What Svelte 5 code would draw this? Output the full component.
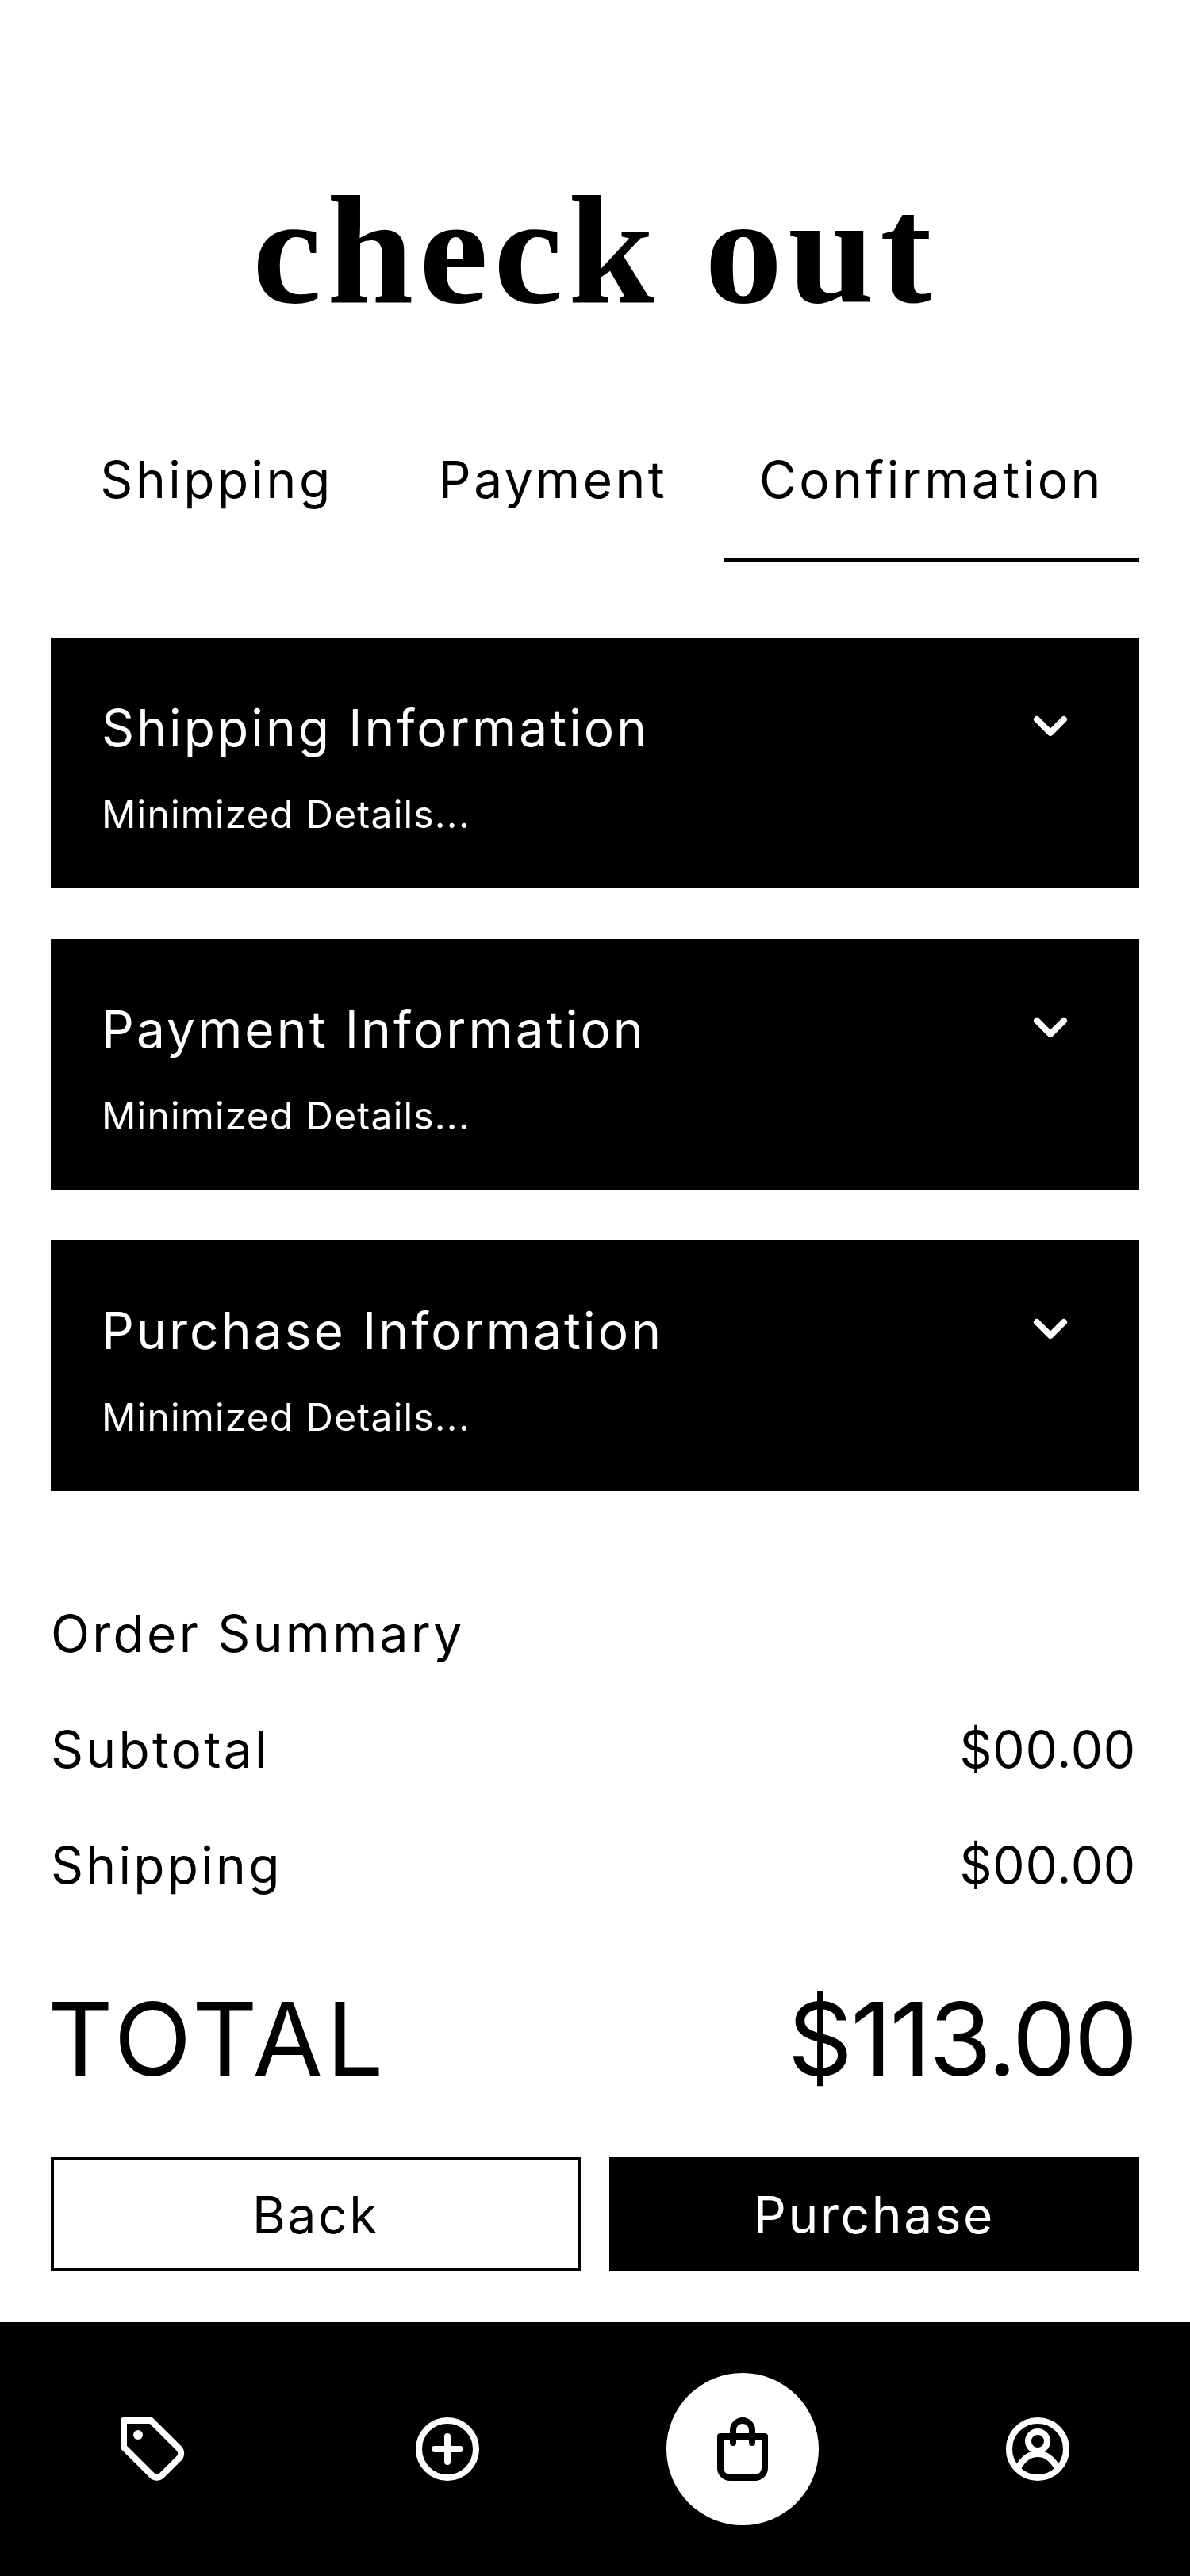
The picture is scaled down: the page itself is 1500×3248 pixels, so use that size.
<script>
  const tabs = [
    { label: 'Shipping', active: false },
    { label: 'Payment', active: false },
    { label: 'Confirmation', active: true }
  ];
  const cards = ['Shipping Information', 'Payment Information', 'Purchase Information'];
</script>

<div class="page">
  <h1 class="title">check out</h1>

  <nav class="tabs">
    {#each tabs as tab}
      <div class="tab" class:active={tab.active}>{tab.label}</div>
    {/each}
  </nav>

  <section class="cards">
    {#each cards as card}
      <article class="card">
        <div class="card-head">
          <span class="card-title">{card}</span>
          <svg class="chev" viewBox="0 0 96 96" fill="none" stroke="#fff" stroke-width="8" stroke-linecap="round" stroke-linejoin="round">
            <path d="M31 37 48 54 65 37" />
          </svg>
        </div>
        <div class="card-sub">Minimized Details...</div>
      </article>
    {/each}
  </section>

  <section class="summary">
    <div class="line heading">Order Summary</div>
    <div class="line"><span>Subtotal</span><span class="amt">$00.00</span></div>
    <div class="line"><span>Shipping</span><span class="amt">$00.00</span></div>
    <div class="total"><span class="total-label">TOTAL</span><span class="total-amt">$113.00</span></div>
  </section>

  <div class="actions">
    <div class="btn outline">Back</div>
    <div class="btn solid">Purchase</div>
  </div>

  <footer class="bar">
    <div class="slot">
      <svg class="icon" viewBox="0 0 24 24" fill="none" stroke="#fff" stroke-width="2" stroke-linecap="round" stroke-linejoin="round">
        <path d="M3 3h8.600l8.800 8.800a2.200 2.200 0 0 1 0 3.100l-5.400 5.400a2.200 2.200 0 0 1-3.100 0L3 11.400V3Z" />
        <circle cx="7.500" cy="7.500" r="1.500" fill="#fff" stroke="none" />
      </svg>
    </div>
    <div class="slot">
      <svg class="icon" viewBox="0 0 24 24" fill="none" stroke="#fff" stroke-width="2" stroke-linecap="round" stroke-linejoin="round">
        <circle cx="12" cy="12" r="9" />
        <path d="M12 8v8M8 12h8" />
      </svg>
    </div>
    <div class="slot">
      <div class="bubble">
        <svg class="icon" viewBox="0 0 24 24" fill="none" stroke="#000" stroke-width="2" stroke-linecap="round" stroke-linejoin="round">
          <path d="M5 8h14v10a3 3 0 0 1-3 3H8a3 3 0 0 1-3-3V8Z" />
          <path d="M9 10V6a3 3 0 0 1 6 0v4" />
        </svg>
      </div>
    </div>
    <div class="slot">
      <svg class="icon" viewBox="0 0 24 24" fill="none" stroke="#fff" stroke-width="2" stroke-linecap="round" stroke-linejoin="round">
        <circle cx="12" cy="12" r="9" />
        <circle cx="12" cy="9.500" r="3" />
        <path d="M5.700 18.200C7.200 15.200 9.400 13.500 12 13.500s4.800 1.700 6.300 4.700" />
      </svg>
    </div>
  </footer>
</div>

<style>
  :global(body) {
    margin: 0;
    background: #fff;
  }
  .page {
    width: 1500px;
    height: 3248px;
    display: flex;
    flex-direction: column;
    color: #000;
    font-family: Inter, "Liberation Sans", sans-serif;
    font-weight: 400;
    will-change: transform;
  }
  .title {
    margin: 195px 0 0;
    height: 240px;
    line-height: 240px;
    text-align: center;
    font-family: "Liberation Serif", serif;
    font-weight: 700;
    font-size: 196px;
    letter-spacing: 7px;
  }
  .tabs {
    margin: 128px 64px 0;
    display: grid;
    grid-template-columns: 418px 430px 524px;
  }
  .tab {
    height: 145px;
    box-sizing: border-box;
    text-align: center;
    font-size: 64px;
    line-height: 84px;
    letter-spacing: 3.5px;
  }
  .tab.active {
    border-bottom: 4px solid #000;
  }
  .cards {
    margin: 96px 64px 0;
    display: flex;
    flex-direction: column;
    gap: 64px;
  }
  .card {
    height: 316px;
    box-sizing: border-box;
    background: #000;
    color: #fff;
    padding: 76px 64px 0;
  }
  .card-head {
    display: flex;
    justify-content: space-between;
    align-items: center;
    height: 76px;
  }
  .card-title {
    font-size: 64px;
    line-height: 76px;
    letter-spacing: 3.1px;
  }
  .chev {
    width: 96px;
    height: 96px;
  }
  .card-sub {
    margin-top: 42px;
    font-size: 48px;
    line-height: 58px;
    letter-spacing: 1.2px;
  }
  .summary {
    margin: 142px 64px 0;
  }
  .line {
    display: flex;
    justify-content: space-between;
    font-size: 64px;
    line-height: 76px;
    height: 146px;
    letter-spacing: 3.3px;
  }
  .amt {
    margin-right: 4px;
    letter-spacing: 0.8px;
  }
  .total {
    display: flex;
    justify-content: space-between;
    font-size: 128px;
    line-height: 150px;
    margin-top: 36px;
  }
  .total-label {
    margin-left: -4px;
    letter-spacing: 4.6px;
  }
  .total-amt {
    margin-right: 4px;
    letter-spacing: -2.6px;
  }
  .actions {
    margin: 74px 64px 0;
    display: grid;
    grid-template-columns: 1fr 1fr;
    gap: 36px;
  }
  .btn {
    height: 144px;
    box-sizing: border-box;
    display: flex;
    align-items: center;
    justify-content: center;
    font-size: 64px;
    letter-spacing: 2.6px;
  }
  .outline {
    border: 4px solid #000;
  }
  .solid {
    background: #000;
    color: #fff;
  }
  .bar {
    margin-top: auto;
    height: 320px;
    background: #000;
    display: grid;
    grid-template-columns: repeat(4, 372px);
    justify-content: center;
    align-items: center;
  }
  .slot {
    display: flex;
    align-items: center;
    justify-content: center;
  }
  .bubble {
    width: 192px;
    height: 192px;
    border-radius: 50%;
    background: #fff;
    display: flex;
    align-items: center;
    justify-content: center;
  }
  .icon {
    display: block;
    width: 96px;
    height: 96px;
  }
</style>
